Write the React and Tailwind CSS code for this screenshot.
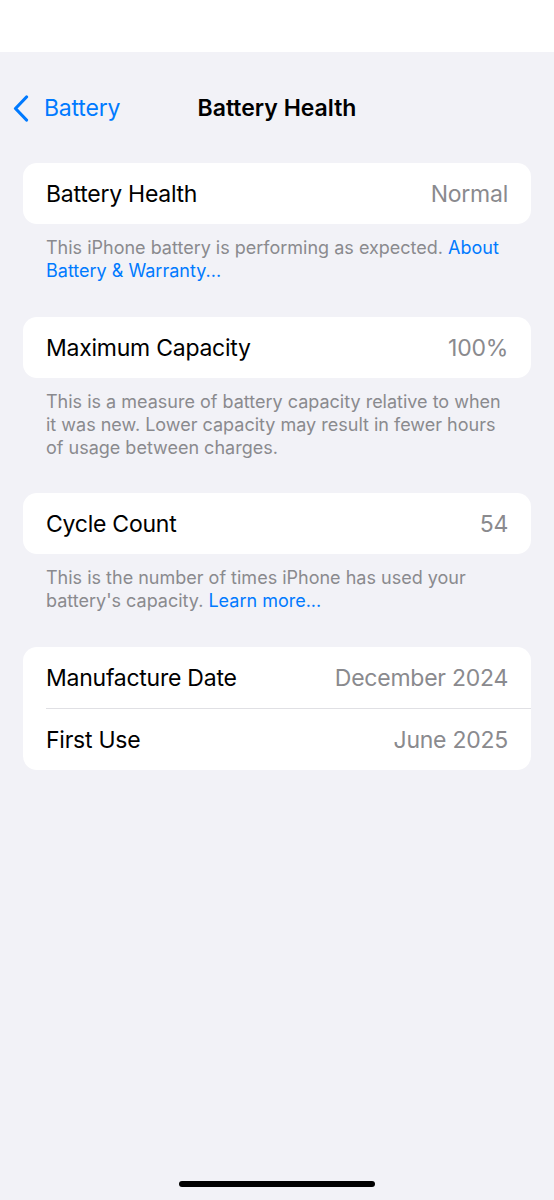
import React from "react";

function Row({ label, value }) {
  return (
    <div className="flex h-[61px] items-center justify-between pl-[23px] pr-[23px] pt-[2px]">
      <span className="text-[23px] text-black tracking-[-0.25px]">{label}</span>
      <span className="text-[23px] text-[#8a8a8e] tracking-[-0.25px]">{value}</span>
    </div>
  );
}

function Card({ children }) {
  return <div className="mx-[23px] overflow-hidden rounded-[14px] bg-white">{children}</div>;
}

function Footer({ children }) {
  return (
    <p className="mx-[23px] px-[23px] pt-[12px] text-[18px] leading-[23px] text-[#8a8a8e] tracking-[0px]">
      {children}
    </p>
  );
}

export default function App() {
  return (
    <div
      className="flex min-h-[1200px] w-[554px] flex-col bg-[#f2f2f7]"
      style={{ fontFamily: "Inter, 'Noto Sans', sans-serif" }}
    >
      <div className="h-[52px] bg-white" />
      <div className="relative flex h-[111px] items-center pt-[2px]">
        <div className="flex items-center pl-[13px] text-[#007aff]">
          <svg width="16" height="27" viewBox="0 0 16 27" fill="none">
            <path d="M13.5 2 L2.5 13.5 L13.5 25" stroke="#007aff" strokeWidth="3.2" strokeLinecap="round" strokeLinejoin="round" />
          </svg>
          <span className="ml-[15px] text-[23px] tracking-[-0.2px]">Battery</span>
        </div>
        <div className="absolute left-0 right-0 top-0 flex h-full items-center justify-center pt-[2px]">
          <span className="text-[23px] font-semibold tracking-[0px] text-black">Battery Health</span>
        </div>
      </div>
      <div className="flex flex-col">
        <Card>
          <Row label="Battery Health" value="Normal" />
        </Card>
        <Footer>
          This iPhone battery is performing as expected.{" "}
          <span className="text-[#007aff]">About Battery &amp; Warranty...</span>
        </Footer>
        <div className="h-[35px]" />
        <Card>
          <Row label="Maximum Capacity" value="100%" />
        </Card>
        <Footer>
          This is a measure of battery capacity relative to when it was new. Lower capacity may result in fewer hours of usage between charges.
        </Footer>
        <div className="h-[34px]" />
        <Card>
          <Row label="Cycle Count" value="54" />
        </Card>
        <Footer>
          This is the number of times iPhone has used your battery's capacity.{" "}
          <span className="text-[#007aff]">Learn more...</span>
        </Footer>
        <div className="h-[35px]" />
        <Card>
          <Row label="Manufacture Date" value="December 2024" />
          <div className="ml-[23px] h-[1px] bg-[#e0e0e4]" />
          <Row label="First Use" value="June 2025" />
        </Card>
      </div>
      <div className="flex-1" />
      <div className="flex justify-center pb-[13px]">
        <div className="h-[6px] w-[196px] rounded-full bg-black" />
      </div>
    </div>
  );
}
